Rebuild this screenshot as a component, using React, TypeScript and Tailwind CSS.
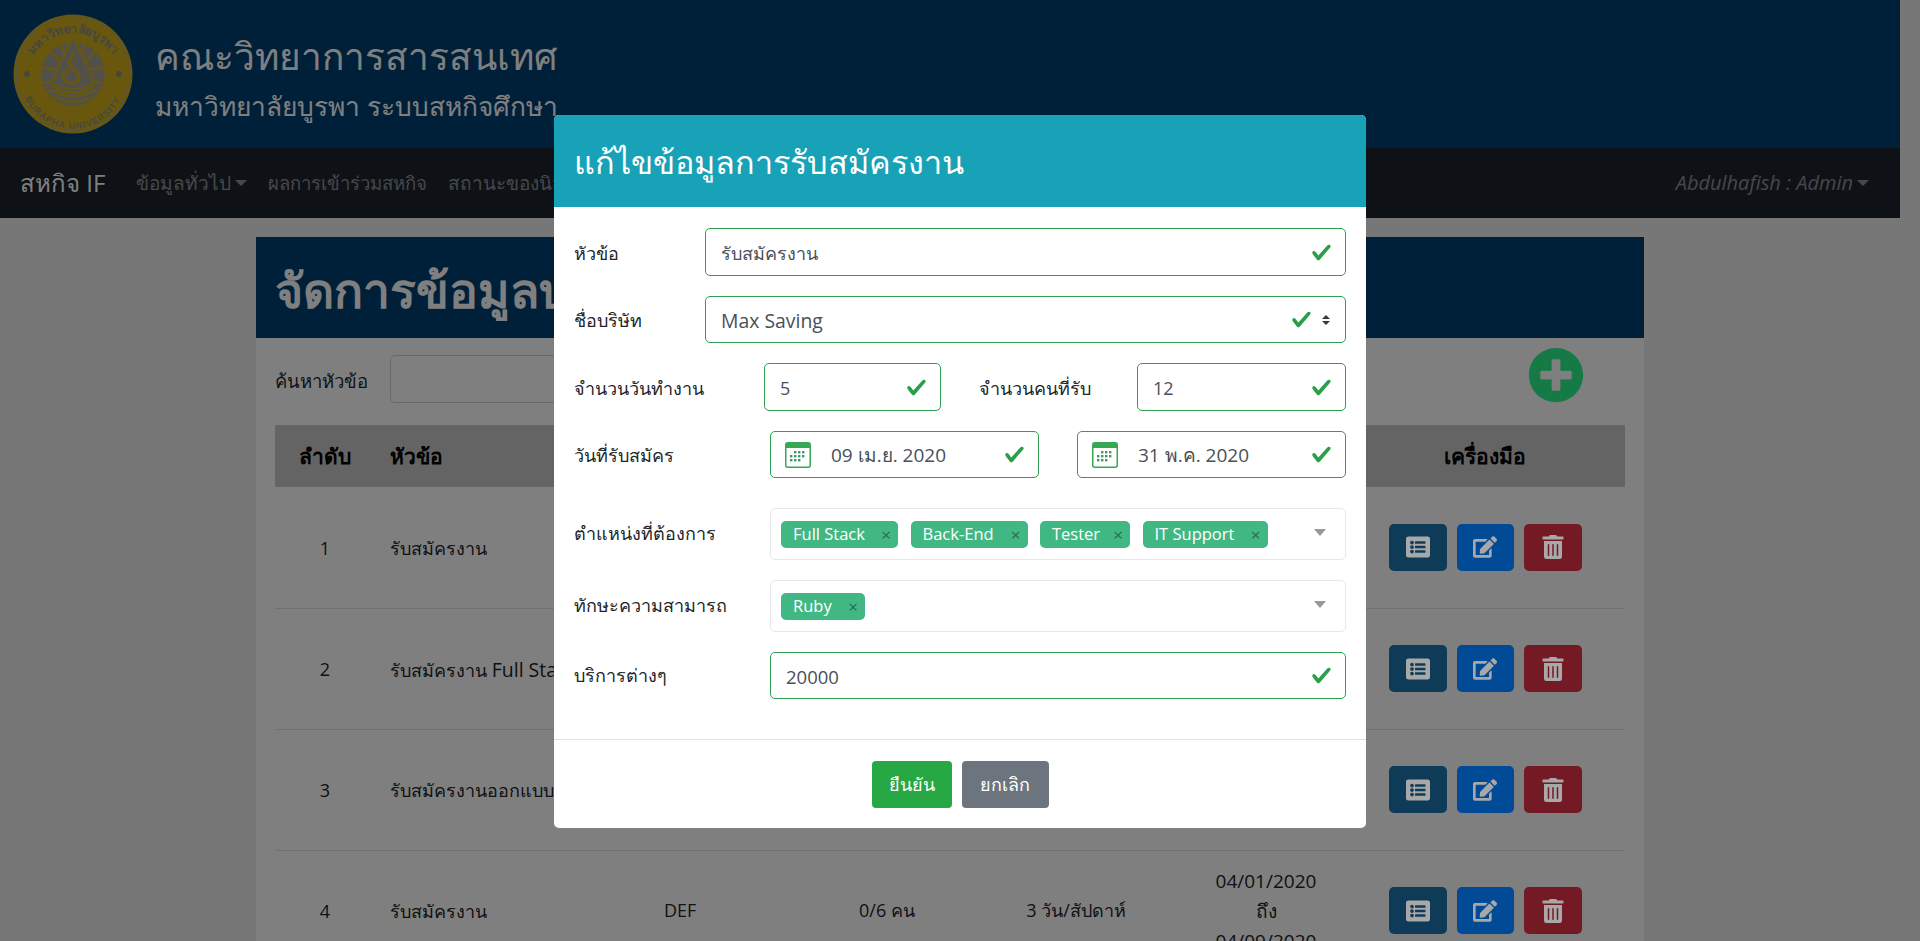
import { FaEdit, FaListAlt, FaPlusCircle, FaTrashAlt } from 'react-icons/fa';

const rows = [
  { no: 1, title: <>รับสมัครงาน</>, company: '', seats: '', days: '', dates: false },
  { no: 2, title: <>รับสมัครงาน <span className="text-[19.5px]">Full Stack</span></>, company: '', seats: '', days: '', dates: false },
  { no: 3, title: <>รับสมัครงานออกแบบเว็บ</>, company: '', seats: '', days: '', dates: true },
  { no: 4, title: <>รับสมัครงาน</>, company: 'DEF', seats: '0/6 คน', days: '3 วัน/สัปดาห์', dates: true },
];

function Check() {
  return (
    <svg viewBox="0 0 8 8" className="size-[21px] shrink-0 fill-[#2a9f4a]">
      <path d="M2.3 6.73L.6 4.53c-.4-1.04.46-1.4 1.1-.8l1.1 1.4 3.4-3.8c.6-.63 1.6-.27 1.2.7l-4 4.6c-.43.5-.8.4-1.1.1z" />
    </svg>
  );
}

function CalendarIcon() {
  return (
    <svg viewBox="0 0 26 26" className="size-[26px] shrink-0">
      <rect x="0.75" y="0.75" width="24.5" height="24.5" rx="2" fill="#fff" stroke="#34a853" strokeWidth="1.5" />
      <path d="M1 3a2 2 0 0 1 2-2h20a2 2 0 0 1 2 2v3H1z" fill="#34a853" />
      <g fill="#3c9a5f">
        <rect x="9" y="9" width="2.4" height="2.4" />
        <rect x="13" y="9" width="2.4" height="2.4" />
        <rect x="17" y="9" width="2.4" height="2.4" />
        <rect x="5" y="13" width="2.4" height="2.4" />
        <rect x="9" y="13" width="2.4" height="2.4" />
        <rect x="13" y="13" width="2.4" height="2.4" />
        <rect x="17" y="13" width="2.4" height="2.4" />
        <rect x="5" y="17" width="2.4" height="2.4" />
        <rect x="9" y="17" width="2.4" height="2.4" />
        <rect x="13" y="17" width="2.4" height="2.4" />
      </g>
    </svg>
  );
}

function Logo() {
  return (
    <svg viewBox="0 0 120 120" className="size-[120px] shrink-0">
      <defs>
        <path id="logoTop" d="M13 66a47 47 0 0 1 94 0" />
        <path id="logoBottom" d="M8 72a53 53 0 0 0 104 0" />
      </defs>
      <circle cx="60" cy="60" r="59.5" fill="#d0ae1a" />
      <circle cx="60" cy="60" r="57" fill="none" stroke="#aaa99c" strokeWidth="1" />
      <text fill="#8f8e84" fontSize="12" fontWeight="700" fontFamily="'Noto Sans', sans-serif">
        <textPath href="#logoTop" startOffset="50%" textAnchor="middle">มหาวิทยาลัยบูรพา</textPath>
      </text>
      <text fill="#8f8e84" fontSize="9" fontWeight="700" letterSpacing="1" fontFamily="'Liberation Sans', sans-serif">
        <textPath href="#logoBottom" startOffset="50%" textAnchor="middle">BURAPHA  UNIVERSITY</textPath>
      </text>
      <circle cx="14" cy="60" r="3" fill="#8f8e84" />
      <circle cx="106" cy="60" r="3" fill="#8f8e84" />
      <circle cx="60" cy="60" r="33" fill="#a3a295" stroke="#d0ae1a" strokeWidth="2.5" />
      <g stroke="#d0ae1a" strokeWidth="2.2" fill="none">
        <path d="M60 60L36 36M60 60L84 36M60 60L27 52M60 60L93 52M60 60L47 28M60 60L73 28" />
        <path d="M60 22C55 36 43 52 39 70C45 82 75 82 81 70C77 52 65 36 60 22Z" fill="#a3a295" />
        <path d="M60 38c-2 8-6 10-2 15s8 4 8 10-10 8-14 3-2-9 4-8" strokeWidth="3" />
        <path d="M28 70c10-5 14 5 32 5s22-10 32-5M31 78c10-4 14 4 29 4s19-8 29-4M38 85c8-3 11 3 22 3s14-6 22-3" strokeWidth="2" />
      </g>
    </svg>
  );
}

function Caret() {
  return <span className="ml-[4px] inline-block border-x-[6px] border-t-[6px] border-x-transparent border-t-current align-[0.2em]" />;
}

function Chip({ label, className }: { label: string; className: string }) {
  return (
    <span className={`flex h-[27px] items-center justify-between rounded-[5px] bg-[#41b883] pr-[7px] pl-[12px] text-[16.5px] text-white ${className}`}>
      {label}
      <span className="text-[17px] leading-none text-[#266d4d]">×</span>
    </span>
  );
}

function ValidInput({ children, className }: { children: React.ReactNode; className: string }) {
  return (
    <div className={`flex items-center rounded-[5px] border border-[#2e9e50] pr-[13px] pl-[15px] text-[#495057] ${className}`}>
      <span className="flex-1 pt-[2px]">{children}</span>
      <Check />
    </div>
  );
}

function DateInput({ value, className }: { value: string; className: string }) {
  return (
    <div className={`flex h-[47px] items-center rounded-[5px] border border-[#2e9e50] pr-[13px] pl-[14px] text-[19px] text-[#495057] ${className}`}>
      <CalendarIcon />
      <span className="ml-[20px] flex-1 pt-[2px]">{value}</span>
      <Check />
    </div>
  );
}

function MultiSelect({ children }: { children: React.ReactNode }) {
  return (
    <div className="flex h-[52px] flex-1 items-center rounded-[5px] border border-[#e8e8e8] pr-[19px] pl-[10px]">
      <div className="flex flex-1 gap-[12.5px]">{children}</div>
      <span className="mb-[3px] border-x-[6px] border-t-[7px] border-x-transparent border-t-[#999]" />
    </div>
  );
}

function EditModal() {
  return (
    <div className="absolute top-[115px] left-[554px] z-30 w-[812px] overflow-hidden rounded-[5px] bg-white text-[18px] text-[#212529]">
      <div className="flex h-[92px] items-center bg-[#17a2b8] px-[20px] text-[32.4px] font-medium text-white">แก้ไขข้อมูลการรับสมัครงาน</div>
      <div className="px-[20px] pt-[21px] pb-[40px]">
        <div className="flex items-center">
          <label className="w-[131px] pt-[2px]">หัวข้อ</label>
          <ValidInput className="h-[48px] flex-1 text-[18px]">รับสมัครงาน</ValidInput>
        </div>
        <div className="mt-[20px] flex items-center">
          <label className="w-[131px] pt-[2px]">ชื่อบริษัท</label>
          <div className="flex h-[47px] flex-1 items-center rounded-[5px] border border-[#2e9e50] pr-[15px] pl-[15px] text-[19.4px] text-[#495057]">
            <span className="flex-1 pt-[2px]">Max Saving</span>
            <Check />
            <svg viewBox="0 0 4 5" className="ml-[10px] h-[10px] w-[8px] fill-[#343a40]">
              <path d="M2 0L0 2h4zm0 5L0 3h4z" />
            </svg>
          </div>
        </div>
        <div className="mt-[20px] flex items-center">
          <label className="w-[190px] pt-[2px]">จำนวนวันทำงาน</label>
          <ValidInput className="h-[48px] w-[177px] text-[18px]">5</ValidInput>
          <label className="ml-[38px] w-[158px] pt-[2px]">จำนวนคนที่รับ</label>
          <ValidInput className="h-[48px] flex-1 text-[18px]">12</ValidInput>
        </div>
        <div className="mt-[20px] flex items-center">
          <label className="w-[196px] pt-[2px]">วันที่รับสมัคร</label>
          <DateInput value="09 เม.ย. 2020" className="w-[269px]" />
          <div className="w-[38px]" />
          <DateInput value="31 พ.ค. 2020" className="flex-1" />
        </div>
        <div className="mt-[30px] flex items-center">
          <label className="w-[196px] pb-[2px]">ตำแหน่งที่ต้องการ</label>
          <MultiSelect>
            <Chip label="Full Stack" className="w-[117px]" />
            <Chip label="Back-End" className="w-[117px]" />
            <Chip label="Tester" className="w-[90px]" />
            <Chip label="IT Support" className="w-[125px]" />
          </MultiSelect>
        </div>
        <div className="mt-[20px] flex items-center">
          <label className="w-[196px] pb-[2px]">ทักษะความสามารถ</label>
          <MultiSelect>
            <Chip label="Ruby" className="w-[84px]" />
          </MultiSelect>
        </div>
        <div className="mt-[20px] flex items-center">
          <label className="w-[196px]">บริการต่างๆ</label>
          <ValidInput className="h-[47px] flex-1 text-[18.5px]">20000</ValidInput>
        </div>
      </div>
      <div className="flex h-[89px] justify-center gap-[10px] border-t border-[#dee2e6] pt-[21px]">
        <button className="h-[47px] w-[80px] rounded-[4px] bg-[#28a745] text-[18px] font-medium text-white">ยืนยัน</button>
        <button className="h-[47px] w-[87px] rounded-[4px] bg-[#6c757d] text-[18px] font-medium text-white">ยกเลิก</button>
      </div>
    </div>
  );
}

function ToolButton({ children, className }: { children: React.ReactNode; className: string }) {
  return <button className={`relative z-20 flex h-[47px] items-center justify-center rounded-[5px] text-[24px] text-[#a8a8a8] ${className}`}>{children}</button>;
}

export default function App() {
  return (
    <div className="relative h-[941px] overflow-hidden bg-[#eeeeee] font-['Open_Sans','Noto_Sans',sans-serif] text-[18px] text-[#212529]">
      <div className="w-[1900px]">
        <header className="flex h-[148px] items-center bg-[#003e72] pl-[13px] text-white">
          <Logo />
          <div className="ml-[22px] pt-[7px]">
            <h1 className="text-[37px] leading-[50px] font-medium">คณะวิทยาการสารสนเทศ</h1>
            <p className="mt-[7px] text-[26.3px] leading-[36px]">มหาวิทยาลัยบูรพา ระบบสหกิจศึกษา</p>
          </div>
        </header>
        <nav className="flex h-[70px] items-center bg-[#1c222c] pr-[31px] pl-[20px] text-[19px] text-white/50">
          <span className="mr-[31px] text-[24px] text-white">สหกิจ IF</span>
          <span className="mr-[21px]">
            ข้อมูลทั่วไป
            <Caret />
          </span>
          <span className="mr-[21px] text-[18.5px]">ผลการเข้าร่วมสหกิจ</span>
          <span>สถานะของนิสิต</span>
          <span className="ml-auto text-[20px] italic">
            Abdulhafish : Admin
            <Caret />
          </span>
        </nav>
        <main className="mx-[256px] mt-[19px] bg-white">
          <div className="flex h-[101px] items-center bg-[#003e72] px-[19px] pt-[4px] text-[48px] font-semibold text-white">จัดการข้อมูลบริษัท</div>
          <div className="px-[19px]">
            <div className="flex h-[87px] items-center">
              <label className="w-[115px] pb-[2px] text-[18.5px] text-[#212529]">ค้นหาหัวข้อ</label>
              <div className="mb-[5px] h-[48px] w-[500px] rounded-[5px] border border-[#ced4da] bg-white" />
              <FaPlusCircle className="relative z-20 mr-[41px] mb-[13px] ml-auto size-[56px] text-[#157a45]" />
            </div>
            <table className="w-full table-fixed border-collapse">
              <thead>
                <tr className="h-[62px] bg-[#c8c8c8] text-[21px] font-bold text-black">
                  <th className="w-[100px] pt-[2px]">ลำดับ</th>
                  <th className="w-[289px] pt-[2px] pl-[15px] text-left">หัวข้อ</th>
                  <th className="w-[126px]" />
                  <th className="w-[194px]" />
                  <th className="w-[184px]" />
                  <th className="w-[196px]" />
                  <th className="pt-[2px] pr-[19px]">เครื่องมือ</th>
                </tr>
              </thead>
              <tbody>
                {rows.map((row) => (
                  <tr key={row.no} className="h-[121px] border-b border-[#dee2e6]">
                    <td className="pt-[2px] text-center">{row.no}</td>
                    <td className="pt-[2px] pl-[15px] whitespace-nowrap">{row.title}</td>
                    <td>{row.company}</td>
                    <td className="text-center">{row.seats}</td>
                    <td className="text-center">{row.days}</td>
                    <td className="text-center text-[19px] leading-[30px]">
                      {row.dates && (
                        <>
                          04/01/2020
                          <br />
                          ถึง
                          <br />
                          04/09/2020
                        </>
                      )}
                    </td>
                    <td className="pr-[19px]">
                      <div className="flex justify-center gap-[10px]">
                        <ToolButton className="w-[58px] bg-[#0e3c58]">
                          <FaListAlt />
                        </ToolButton>
                        <ToolButton className="w-[57px] bg-[#014a96]">
                          <FaEdit />
                        </ToolButton>
                        <ToolButton className="w-[58px] bg-[#741a25]">
                          <FaTrashAlt />
                        </ToolButton>
                      </div>
                    </td>
                  </tr>
                ))}
              </tbody>
            </table>
          </div>
        </main>
      </div>
      <div className="absolute inset-0 z-10 bg-black/50" />
      <EditModal />
    </div>
  );
}
